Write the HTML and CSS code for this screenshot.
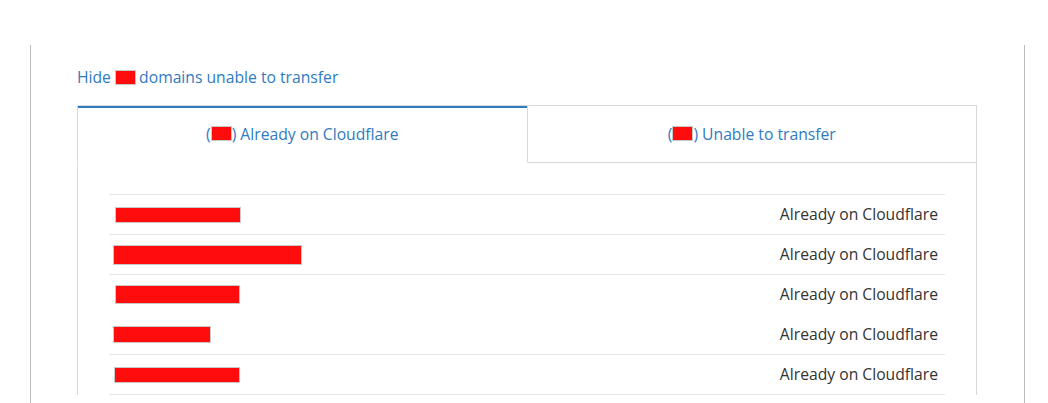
FILE: index.html
```html
<!DOCTYPE html>
<html lang="en">
<head>
    <meta charset="UTF-8">
    <meta name="viewport" content="width=device-width, initial-scale=1.0">
    <title>Transfer domains</title>
    <link rel="stylesheet" href="styles.css">
</head>
<body>
    <div class="page">
        <a href="#" class="hide-link">Hide <span class="redact redact-link"></span> domains unable to transfer</a>

        <div class="tabs">
            <div class="tab-bar">
                <a href="#" class="tab active">(<span class="redact redact-count"></span>) Already on Cloudflare</a>
                <a href="#" class="tab">(<span class="redact redact-count"></span>) Unable to transfer</a>
            </div>
            <div class="tab-panel">
                <div class="domain-list">
                    <div class="domain-row">
                        <span class="redact" style="width: 124px; height: 14px; margin-left: 6px;"></span>
                        <span class="status">Already on Cloudflare</span>
                    </div>
                    <div class="domain-row">
                        <span class="redact" style="width: 187px; height: 18px; margin-left: 4px;"></span>
                        <span class="status">Already on Cloudflare</span>
                    </div>
                    <div class="domain-row">
                        <span class="redact" style="width: 123px; height: 17px; margin-left: 6px;"></span>
                        <span class="status">Already on Cloudflare</span>
                    </div>
                    <div class="domain-row no-line">
                        <span class="redact" style="width: 96px; height: 15px; margin-left: 4px;"></span>
                        <span class="status">Already on Cloudflare</span>
                    </div>
                    <div class="domain-row">
                        <span class="redact" style="width: 124px; height: 14px; margin-left: 5px;"></span>
                        <span class="status">Already on Cloudflare</span>
                    </div>
                </div>
            </div>
        </div>
    </div>
</body>
</html>
```

FILE: styles.css
```css
body {
    margin: 0;
    font-family: "Open Sans", "Noto Sans", sans-serif;
    background: #fff;
    color: #333;
}
.page {
    margin: 45px 23px 0 30px;
    border-left: 1px solid #bdbdbd;
    border-right: 1px solid #bdbdbd;
    padding: 21px 0 0 46px;
    min-height: 337px;
}

/* 隐藏链接 */
.hide-link {
    display: inline-block;
    color: #2f7bbf;
    font-size: 15.7px;
    line-height: 22px;
    text-decoration: none;
}

/* 红色遮挡块 */
.redact {
    display: inline-block;
    background: #ff0c0c;
    border: 1px solid #c8c8c8;
    vertical-align: middle;
}
.redact-link {
    width: 19px;
    height: 13px;
    margin: -3px -1px 0 0;
}
.redact-count {
    width: 19px;
    height: 13px;
    margin-top: -2px;
}

/* 标签页 */
.tabs {
    width: 900px;
    margin-top: 17px;
}
.tab-bar {
    display: flex;
}
.tab {
    flex: 1;
    display: flex;
    align-items: center;
    justify-content: center;
    height: 56px;
    color: #2f7bbf;
    font-size: 15.7px;
    text-decoration: none;
    border: 1px solid #d9d9d9;
    border-left: none;
}
.tab.active {
    border-left: 1px solid #d9d9d9;
    border-bottom: 1px solid transparent;
    box-shadow: inset 0 2px 0 #2f7bbf;
}
.tab-panel {
    border-left: 1px solid #d9d9d9;
    border-right: 1px solid #d9d9d9;
    padding: 31px 31px 0;
}
.domain-row {
    display: flex;
    align-items: center;
    justify-content: space-between;
    height: 39px;
    border-top: 1px solid #e6e6e6;
    padding-right: 7px;
}
.domain-row:last-child {
    border-bottom: 1px solid #e6e6e6;
}
.domain-row.no-line {
    border-top-color: transparent;
}
.status {
    font-size: 15.7px;
    line-height: 20px;
    margin-top: -1px;
    color: #333;
}
```
